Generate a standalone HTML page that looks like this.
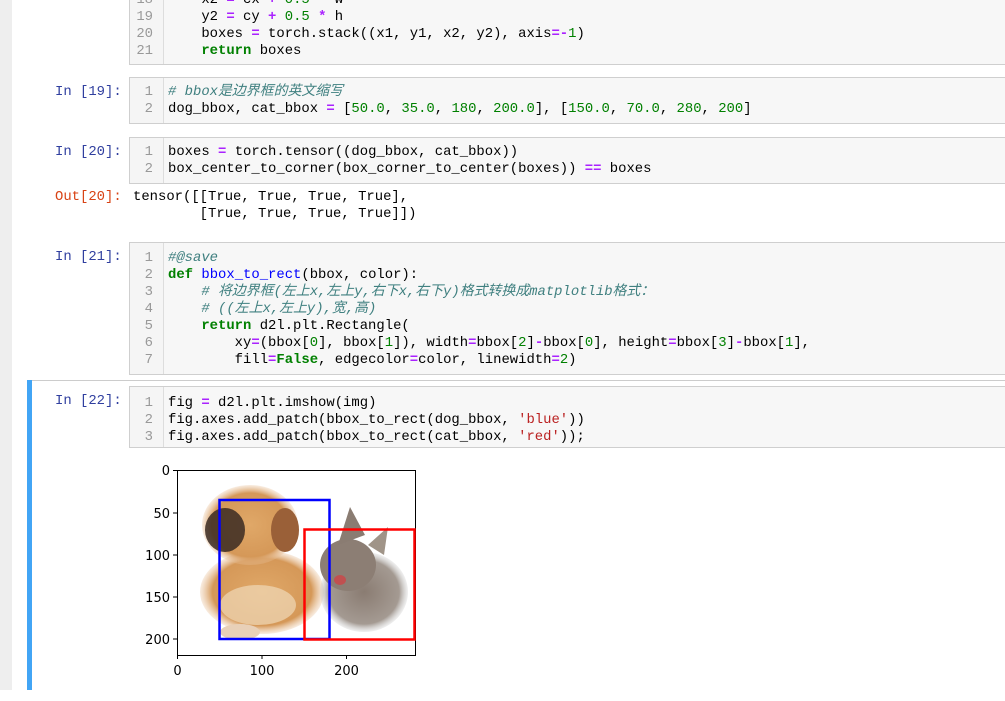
<!DOCTYPE html>
<html><head><meta charset="utf-8"><style>
body{margin:0;width:1005px;height:690px;overflow:hidden;background:#fff;position:relative;font-family:"Liberation Mono","Noto Sans CJK SC",monospace;}
.strip{position:absolute;left:0;top:0;width:12px;height:690px;background:#eee;}
.box{position:absolute;left:129px;width:900px;background:#f7f7f7;border:1px solid #cfcfcf;}
.gut{position:absolute;left:0;top:0;bottom:0;width:33px;border-right:1px solid #ddd;background:#f5f5f5;}
.ln{position:absolute;left:0;width:23px;text-align:right;color:#999;font-size:13.9px;line-height:17px;}
.cd{position:absolute;left:38px;white-space:pre;font-size:13.9px;line-height:17px;color:#000;}
.pr{position:absolute;left:55px;font-size:13.9px;line-height:17px;color:#303f9f;white-space:pre;}
.out{color:#d84315;left:55px;}
.k{color:#008000;font-weight:bold}.o{color:#aa22ff;font-weight:bold}.n{color:#008000}.c{color:#408080;font-style:italic}.f{color:#0000ff}.s{color:#ba2121}
</style></head><body>
<div class="strip"></div>
<div class="box" style="top:-20px;height:83px;"><div class="gut"></div>
<div class="ln" style="top:11px">18</div><div class="ln" style="top:28px">19</div><div class="ln" style="top:45px">20</div><div class="ln" style="top:62px">21</div>
<div class="cd" style="top:11px">    x2 <span class="o">=</span> cx <span class="o">+</span> <span class="n">0.5</span> <span class="o">*</span> w
    y2 <span class="o">=</span> cy <span class="o">+</span> <span class="n">0.5</span> <span class="o">*</span> h
    boxes <span class="o">=</span> torch.stack((x1, y1, x2, y2), axis<span class="o">=-</span><span class="n">1</span>)
    <span class="k">return</span> boxes</div></div>
<div class="pr" style="top:84px">In [19]:</div>
<div class="box" style="top:77px;height:45px;"><div class="gut"></div>
<div class="ln" style="top:6px">1</div><div class="ln" style="top:23px">2</div>
<div class="cd" style="top:6px"><span class="c"># bbox是边界框的英文缩写</span>
dog_bbox, cat_bbox <span class="o">=</span> [<span class="n">50.0</span>, <span class="n">35.0</span>, <span class="n">180</span>, <span class="n">200.0</span>], [<span class="n">150.0</span>, <span class="n">70.0</span>, <span class="n">280</span>, <span class="n">200</span>]</div></div>
<div class="pr" style="top:144px">In [20]:</div>
<div class="box" style="top:137px;height:45px;"><div class="gut"></div>
<div class="ln" style="top:6px">1</div><div class="ln" style="top:23px">2</div>
<div class="cd" style="top:6px">boxes <span class="o">=</span> torch.tensor((dog_bbox, cat_bbox))
box_center_to_corner(box_corner_to_center(boxes)) <span class="o">==</span> boxes</div></div>
<div class="pr out" style="top:189px">Out[20]:</div>
<div class="cd" style="left:133px;top:189px">tensor([[True, True, True, True],
        [True, True, True, True]])</div>
<div class="pr" style="top:249px">In [21]:</div>
<div class="box" style="top:242px;height:131px;"><div class="gut"></div>
<div class="ln" style="top:7px">1</div><div class="ln" style="top:24px">2</div><div class="ln" style="top:41px">3</div><div class="ln" style="top:58px">4</div><div class="ln" style="top:75px">5</div><div class="ln" style="top:92px">6</div><div class="ln" style="top:109px">7</div>
<div class="cd" style="top:7px"><span class="c">#@save</span>
<span class="k">def</span> <span class="f">bbox_to_rect</span>(bbox, color):
    <span class="c"># 将边界框(左上x,左上y,右下x,右下y)格式转换成matplotlib格式：</span>
    <span class="c"># ((左上x,左上y),宽,高)</span>
    <span class="k">return</span> d2l.plt.Rectangle(
        xy<span class="o">=</span>(bbox[<span class="n">0</span>], bbox[<span class="n">1</span>]), width<span class="o">=</span>bbox[<span class="n">2</span>]<span class="o">-</span>bbox[<span class="n">0</span>], height<span class="o">=</span>bbox[<span class="n">3</span>]<span class="o">-</span>bbox[<span class="n">1</span>],
        fill<span class="o">=</span><span class="k">False</span>, edgecolor<span class="o">=</span>color, linewidth<span class="o">=</span><span class="n">2</span>)</div></div>
<div style="position:absolute;left:27px;top:380px;width:990px;height:320px;border-top:1px solid #ccc;"></div>
<div style="position:absolute;left:27px;top:380px;width:5px;height:310px;background:#42a5f5;"></div>
<div class="pr" style="top:393px">In [22]:</div>
<div class="box" style="top:386px;height:60px;"><div class="gut"></div>
<div class="ln" style="top:8px">1</div><div class="ln" style="top:25px">2</div><div class="ln" style="top:42px">3</div>
<div class="cd" style="top:8px">fig <span class="o">=</span> d2l.plt.imshow(img)
fig.axes.add_patch(bbox_to_rect(dog_bbox, <span class="s">'blue'</span>))
fig.axes.add_patch(bbox_to_rect(cat_bbox, <span class="s">'red'</span>));</div></div>
<svg style="position:absolute;left:0;top:0" width="1005" height="690" font-family="DejaVu Sans, sans-serif" font-size="13">
<defs>
<radialGradient id="dog" cx="50%" cy="50%" r="50%"><stop offset="0" stop-color="#e0a868"/><stop offset="0.8" stop-color="#d59858"/><stop offset="1" stop-color="#e8c098" stop-opacity="0.3"/></radialGradient>
<radialGradient id="cat" cx="50%" cy="50%" r="50%"><stop offset="0" stop-color="#8a7c72"/><stop offset="0.8" stop-color="#a49a92"/><stop offset="1" stop-color="#ccc" stop-opacity="0.3"/></radialGradient>
</defs>
<g>
<ellipse cx="262" cy="592" rx="62" ry="42" fill="url(#dog)"/>
<ellipse cx="250" cy="525" rx="48" ry="40" fill="url(#dog)"/>
<ellipse cx="225" cy="530" rx="20" ry="22" fill="#3a2a22" opacity="0.85"/>
<ellipse cx="285" cy="530" rx="14" ry="22" fill="#9a6038"/>
<ellipse cx="258" cy="605" rx="38" ry="20" fill="#f0d8b8" opacity="0.7"/>
<ellipse cx="240" cy="632" rx="20" ry="8" fill="#e8d0b8"/>
<ellipse cx="364" cy="592" rx="44" ry="40" fill="url(#cat)"/>
<ellipse cx="348" cy="565" rx="28" ry="26" fill="#8c7e74"/>
<polygon points="338,545 350,507 365,535" fill="#8a7c72"/>
<polygon points="368,545 388,527 384,555" fill="#a09488"/>
<ellipse cx="340" cy="580" rx="6" ry="5" fill="#c05050"/>
</g>
<rect x="177.5" y="470.5" width="238" height="185" fill="none" stroke="#000" stroke-width="1"/>
<rect x="219.5" y="500" width="110" height="139" fill="none" stroke="#0000ff" stroke-width="2.5"/>
<rect x="304.5" y="529.5" width="110" height="110" fill="none" stroke="#ff0000" stroke-width="2.5"/>
<g stroke="#000"><line x1="173" y1="470.5" x2="177" y2="470.5"/><line x1="173" y1="513" x2="177" y2="513"/><line x1="173" y1="555" x2="177" y2="555"/><line x1="173" y1="597" x2="177" y2="597"/><line x1="173" y1="639" x2="177" y2="639"/>
<line x1="177.5" y1="655" x2="177.5" y2="659"/><line x1="262" y1="655" x2="262" y2="659"/><line x1="346.5" y1="655" x2="346.5" y2="659"/></g>
<g text-anchor="end" fill="#000"><text x="170" y="475">0</text><text x="170" y="518">50</text><text x="170" y="560">100</text><text x="170" y="602">150</text><text x="170" y="644">200</text></g>
<g text-anchor="middle" fill="#000"><text x="177.5" y="675">0</text><text x="262" y="675">100</text><text x="346.5" y="675">200</text></g>
</svg>
</body></html>
